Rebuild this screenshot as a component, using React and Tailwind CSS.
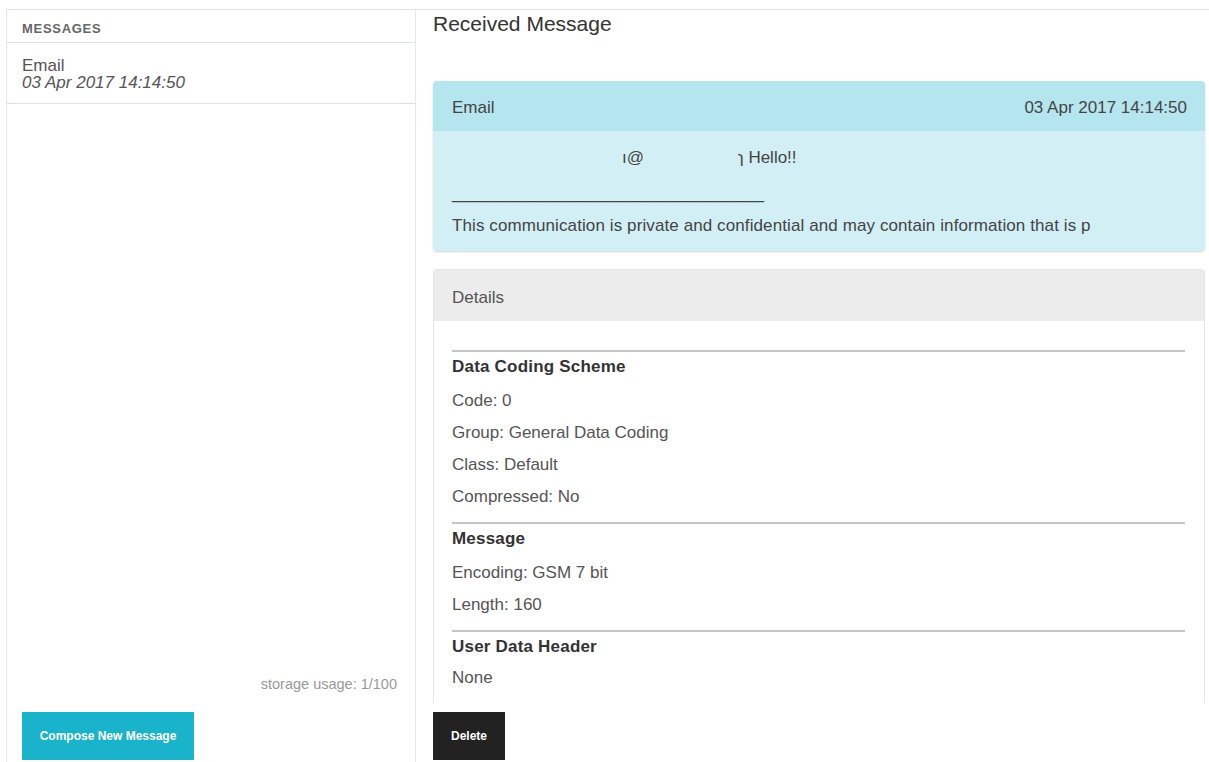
import React from "react";

const font = { fontFamily: '"Liberation Sans", Arial, sans-serif' };

function Section({ title, rows, first, rowsTop = "mt-[5px]" }) {
  return (
    <div className={first ? "" : "mt-[11px]"}>
      <div className="h-[2px] bg-[#c6c6c6]" />
      <div className="h-[26px] pt-[4px] flex items-center text-[17px] font-bold text-[#333] tracking-[0.2px]">
        {title}
      </div>
      <div className={rowsTop}>
        {rows.map((r) => (
          <div key={r} className="h-[32px] pt-[4px] flex items-center text-[17px] text-[#555]">
            {r}
          </div>
        ))}
      </div>
    </div>
  );
}

export default function App() {
  return (
    <div className="w-[1209px] h-[762px] bg-white overflow-hidden" style={font}>
      <div className="h-[9px]" />
      <div className="ml-[6px] h-[753px] border-t border-[#dde3ee] flex">
        {/* message list */}
        <aside className="w-[410px] shrink-0 border-l border-r border-[#e4e8ee] flex flex-col">
          <div className="h-[33px] pt-[5px] flex items-center px-[15px] border-b border-[#dde1e6] text-[13px] font-bold tracking-[0.7px] text-[#666]">
            MESSAGES
          </div>
          <div className="pt-[14px] pb-[12px] px-[15px] border-b border-[#dde1e6] text-[17px] leading-[17px] text-[#555]">
            <div>Email</div>
            <div className="italic">03 Apr 2017 14:14:50</div>
          </div>
          <div className="flex-1" />
          <div className="pr-[18px] text-right text-[14.5px] text-[#999] leading-[20px]">
            storage usage: 1/100
          </div>
          <div className="px-[15px] pt-[18px] pb-[2px]">
            <button className="w-[172px] h-[48px] bg-[#19b3cc] text-white text-[12px] font-bold">
              Compose New Message
            </button>
          </div>
        </aside>

        {/* message view */}
        <main className="flex-1 pl-[17px] pr-[4px] flex flex-col">
          <div className="h-[30px] shrink-0 flex items-center text-[21px] text-[#333] -mt-[1px]">
            Received Message
          </div>
          <div className="h-[664px] shrink-0 flex flex-col">
            <div className="mt-[42px] shrink-0 rounded-[4px] overflow-hidden shadow-[0_1px_2px_rgba(0,0,0,0.18)]">
              <div className="h-[50px] pt-[4px] bg-[#b5e6f0] flex items-center justify-between pl-[19px] pr-[18px] text-[17px] text-[#444]">
                <span>Email</span>
                <span>03 Apr 2017 14:14:50</span>
              </div>
              <div className="bg-[#d2eff5] pl-[19px] pr-[18px] pt-[17px] pb-[15px] text-[17px] leading-[20px] text-[#444]">
                <div className="h-[20px] relative">
                  <span className="absolute left-[170px] top-0">ı@</span>
                  <span className="absolute left-[286px] top-0">ɿ Hello!!</span>
                </div>
                <div className="mt-[16px] h-[20px] whitespace-nowrap">
                  _________________________________
                </div>
                <div className="mt-[12px] h-[20px] whitespace-nowrap tracking-[0.1px]">
                  This communication is private and confidential and may contain information that is p
                </div>
              </div>
            </div>

            <div className="mt-[18px] flex-1 min-h-0 rounded-t-[4px] border-x border-t border-[#e6e6e6] flex flex-col overflow-hidden">
              <div className="h-[51px] pt-[4px] shrink-0 bg-[#ececec] flex items-center pl-[18px] text-[17px] text-[#555]">
                Details
              </div>
              <div className="pl-[18px] pr-[19px] pt-[29px]">
                <Section
                  first
                  title="Data Coding Scheme"
                  rows={["Code: 0", "Group: General Data Coding", "Class: Default", "Compressed: No"]}
                />
                <Section title="Message" rows={["Encoding: GSM 7 bit", "Length: 160"]} />
                <Section title="User Data Header" rows={["None"]} rowsTop="mt-[2px]" />
              </div>
            </div>
          </div>
          <div className="pt-[9px] shrink-0">
            <button className="w-[72px] h-[48px] bg-[#222] text-white text-[12px] font-bold">
              Delete
            </button>
          </div>
        </main>
      </div>
    </div>
  );
}
